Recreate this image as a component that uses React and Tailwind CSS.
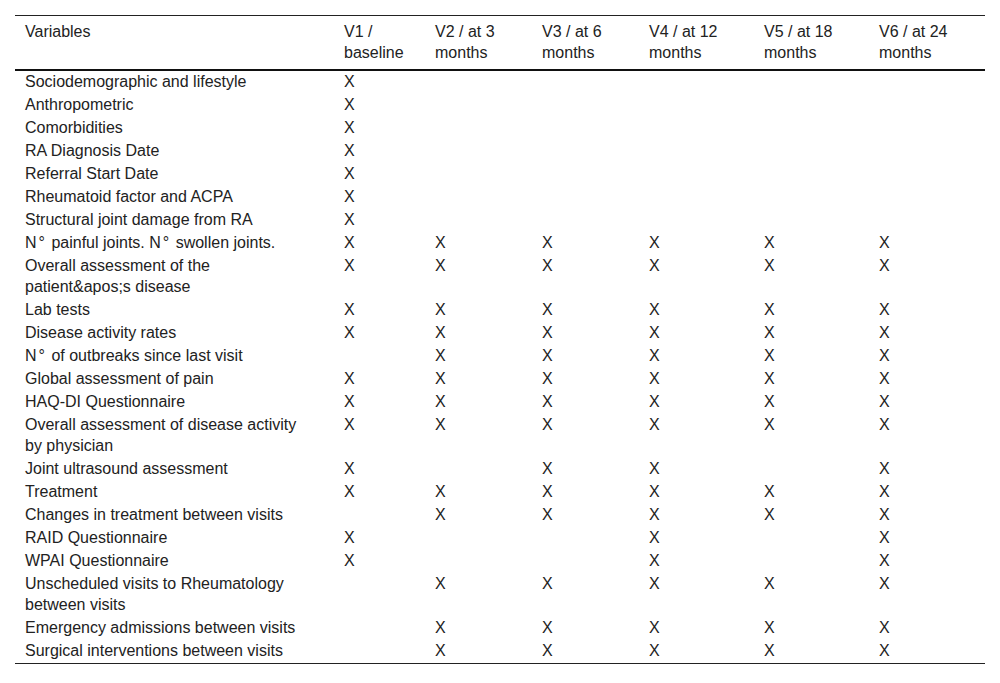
const cols = ["V1 / baseline", "V2 / at 3 months", "V3 / at 6 months", "V4 / at 12 months", "V5 / at 18 months", "V6 / at 24 months"];

const Deg = () => <span className="px-[2px]">{"\u00b0"}</span>;

// each row: label + which visits are marked
const rows = [
  ["Sociodemographic and lifestyle", [1, 0, 0, 0, 0, 0]],
  ["Anthropometric", [1, 0, 0, 0, 0, 0]],
  ["Comorbidities", [1, 0, 0, 0, 0, 0]],
  ["RA Diagnosis Date", [1, 0, 0, 0, 0, 0]],
  ["Referral Start Date", [1, 0, 0, 0, 0, 0]],
  ["Rheumatoid factor and ACPA", [1, 0, 0, 0, 0, 0]],
  ["Structural joint damage from RA", [1, 0, 0, 0, 0, 0]],
  [<>N<Deg /> painful joints. N<Deg /> swollen joints.</>, [1, 1, 1, 1, 1, 1]],
  ["Overall assessment of the patient&apos;s disease", [1, 1, 1, 1, 1, 1]],
  ["Lab tests", [1, 1, 1, 1, 1, 1]],
  ["Disease activity rates", [1, 1, 1, 1, 1, 1]],
  [<>N<Deg /> of outbreaks since last visit</>, [0, 1, 1, 1, 1, 1]],
  ["Global assessment of pain", [1, 1, 1, 1, 1, 1]],
  ["HAQ-DI Questionnaire", [1, 1, 1, 1, 1, 1]],
  ["Overall assessment of disease activity by physician", [1, 1, 1, 1, 1, 1]],
  ["Joint ultrasound assessment", [1, 0, 1, 1, 0, 1]],
  ["Treatment", [1, 1, 1, 1, 1, 1]],
  ["Changes in treatment between visits", [0, 1, 1, 1, 1, 1]],
  ["RAID Questionnaire", [1, 0, 0, 1, 0, 1]],
  ["WPAI Questionnaire", [1, 0, 0, 1, 0, 1]],
  ["Unscheduled visits to Rheumatology between visits", [0, 1, 1, 1, 1, 1]],
  ["Emergency admissions between visits", [0, 1, 1, 1, 1, 1]],
  ["Surgical interventions between visits", [0, 1, 1, 1, 1, 1]],
];

const widths = ["w-[319px]", "w-[91px]", "w-[107px]", "w-[107px]", "w-[115px]", "w-[115px]", "w-[116px]"];

export default function App() {
  return (
    <div className="min-h-screen bg-white pt-[15px] pl-[15px] text-[#222]" style={{ fontFamily: '"Liberation Sans", Arial, sans-serif' }}>
      <table className="w-[970px] table-fixed border-collapse text-[16px] leading-[21px]">
        <colgroup>
          {widths.map((w, i) => <col key={i} className={w} />)}
        </colgroup>
        <thead>
          <tr className="border-t border-b-2 border-t-[#222] border-b-[#111]">
            <th className="px-[10px] pt-[5px] pb-[6px] text-left align-top font-normal">Variables</th>
            {cols.map((c) => (
              <th key={c} className="px-[10px] pt-[5px] pb-[6px] text-left align-top font-normal">{c}</th>
            ))}
          </tr>
        </thead>
        <tbody className="border-b border-[#222]">
          {rows.map(([label, marks], r) => (
            <tr key={r}>
              <td className="pl-[10px] pr-[19px] pt-0 pb-[2px] align-top">{label}</td>
              {marks.map((m, i) => (
                <td key={i} className="px-[10px] pt-0 pb-[2px] align-top">{m ? "X" : ""}</td>
              ))}
            </tr>
          ))}
        </tbody>
      </table>
    </div>
  );
}
